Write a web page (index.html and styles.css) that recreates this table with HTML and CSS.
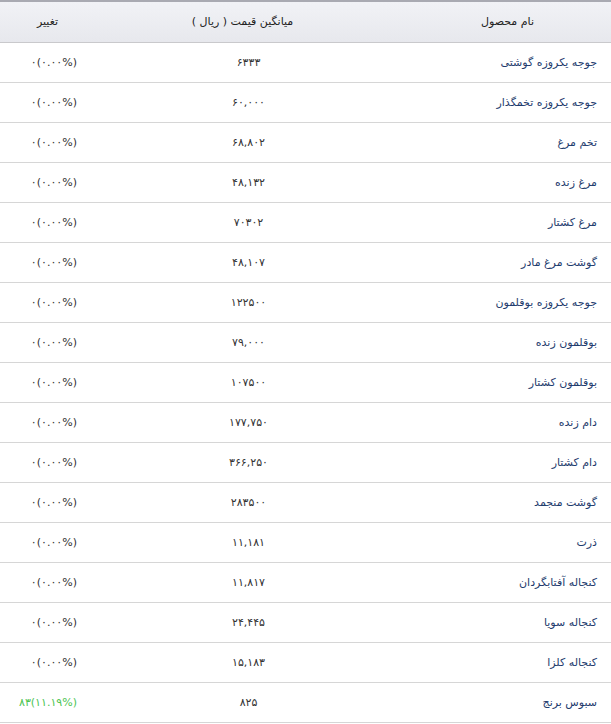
FILE: index.html
```html
<!DOCTYPE html>
<html lang="fa" dir="rtl">
<head>
<meta charset="utf-8">
<title>قیمت محصولات</title>
<link rel="stylesheet" href="styles.css">
</head>
<body>
<table class="prices">
  <colgroup>
    <col class="w-name">
    <col class="w-price">
    <col class="w-change">
  </colgroup>
  <thead>
    <tr>
      <th class="h-name">نام محصول</th>
      <th class="h-price">میانگین قیمت ( ریال )</th>
      <th class="h-change">تغییر</th>
    </tr>
  </thead>
  <tbody>
    <tr><td class="name">جوجه یکروزه گوشتی</td><td class="price">۶۳۳۳</td><td class="change"><span class="ltr">۰(۰.۰۰%)</span></td></tr>
    <tr><td class="name">جوجه یکروزه تخمگذار</td><td class="price">۶۰,۰۰۰</td><td class="change"><span class="ltr">۰(۰.۰۰%)</span></td></tr>
    <tr><td class="name">تخم مرغ</td><td class="price">۶۸,۸۰۲</td><td class="change"><span class="ltr">۰(۰.۰۰%)</span></td></tr>
    <tr><td class="name">مرغ زنده</td><td class="price">۴۸,۱۳۲</td><td class="change"><span class="ltr">۰(۰.۰۰%)</span></td></tr>
    <tr><td class="name">مرغ کشتار</td><td class="price">۷۰۳۰۲</td><td class="change"><span class="ltr">۰(۰.۰۰%)</span></td></tr>
    <tr><td class="name">گوشت مرغ مادر</td><td class="price">۴۸,۱۰۷</td><td class="change"><span class="ltr">۰(۰.۰۰%)</span></td></tr>
    <tr><td class="name">جوجه یکروزه بوقلمون</td><td class="price">۱۲۲۵۰۰</td><td class="change"><span class="ltr">۰(۰.۰۰%)</span></td></tr>
    <tr><td class="name">بوقلمون زنده</td><td class="price">۷۹,۰۰۰</td><td class="change"><span class="ltr">۰(۰.۰۰%)</span></td></tr>
    <tr><td class="name">بوقلمون کشتار</td><td class="price">۱۰۷۵۰۰</td><td class="change"><span class="ltr">۰(۰.۰۰%)</span></td></tr>
    <tr><td class="name">دام زنده</td><td class="price">۱۷۷,۷۵۰</td><td class="change"><span class="ltr">۰(۰.۰۰%)</span></td></tr>
    <tr><td class="name">دام کشتار</td><td class="price">۳۶۶,۲۵۰</td><td class="change"><span class="ltr">۰(۰.۰۰%)</span></td></tr>
    <tr><td class="name">گوشت منجمد</td><td class="price">۲۸۳۵۰۰</td><td class="change"><span class="ltr">۰(۰.۰۰%)</span></td></tr>
    <tr><td class="name">ذرت</td><td class="price">۱۱,۱۸۱</td><td class="change"><span class="ltr">۰(۰.۰۰%)</span></td></tr>
    <tr><td class="name">کنجاله آفتابگردان</td><td class="price">۱۱,۸۱۷</td><td class="change"><span class="ltr">۰(۰.۰۰%)</span></td></tr>
    <tr><td class="name">کنجاله سویا</td><td class="price">۲۴,۴۴۵</td><td class="change"><span class="ltr">۰(۰.۰۰%)</span></td></tr>
    <tr><td class="name">کنجاله کلزا</td><td class="price">۱۵,۱۸۳</td><td class="change"><span class="ltr">۰(۰.۰۰%)</span></td></tr>
    <tr><td class="name">سبوس برنج</td><td class="price">۸۲۵</td><td class="change up"><span class="ltr">۸۳(۱۱.۱۹%)</span></td></tr>
  </tbody>
</table>
</body>
</html>
```
FILE: styles.css
```css
html, body {
  margin: 0;
  padding: 0;
  background: #ffffff;
}
body {
  font-family: "DejaVu Sans", "Noto Sans", sans-serif;
  font-size: 11px;
  color: #333333;
}
.prices {
  width: 611px;
  border-collapse: collapse;
  table-layout: fixed;
  border-top: 2px solid #a9aab2;
}
.w-name { width: 221px; }
.w-price { width: 295px; }
.w-change { width: 95px; }
.prices th,
.prices td {
  box-sizing: border-box;
  height: 40px;
  padding: 0;
  vertical-align: middle;
}
.prices th {
  height: 41px;
  font-weight: normal;
  color: #222222;
  background: linear-gradient(#f1f2f6, #e7e8ed);
  border-bottom: 1px solid #c9c9cc;
  text-align: center;
}
.prices td {
  border-bottom: 1px solid #d6d6d6;
}
.prices th.h-name { padding-left: 14px; }
.prices td.name {
  text-align: right;
  padding-right: 14px;
  color: #1e3b6d;
}
.prices td.price {
  text-align: center;
  padding-left: 12px;
  color: #333333;
}
.prices td.change {
  text-align: right;
  padding-right: 18px;
  color: #333333;
}
.prices td.change.up { color: #4cc452; }
.ltr {
  direction: ltr;
  unicode-bidi: isolate;
  display: inline-block;
}
```
